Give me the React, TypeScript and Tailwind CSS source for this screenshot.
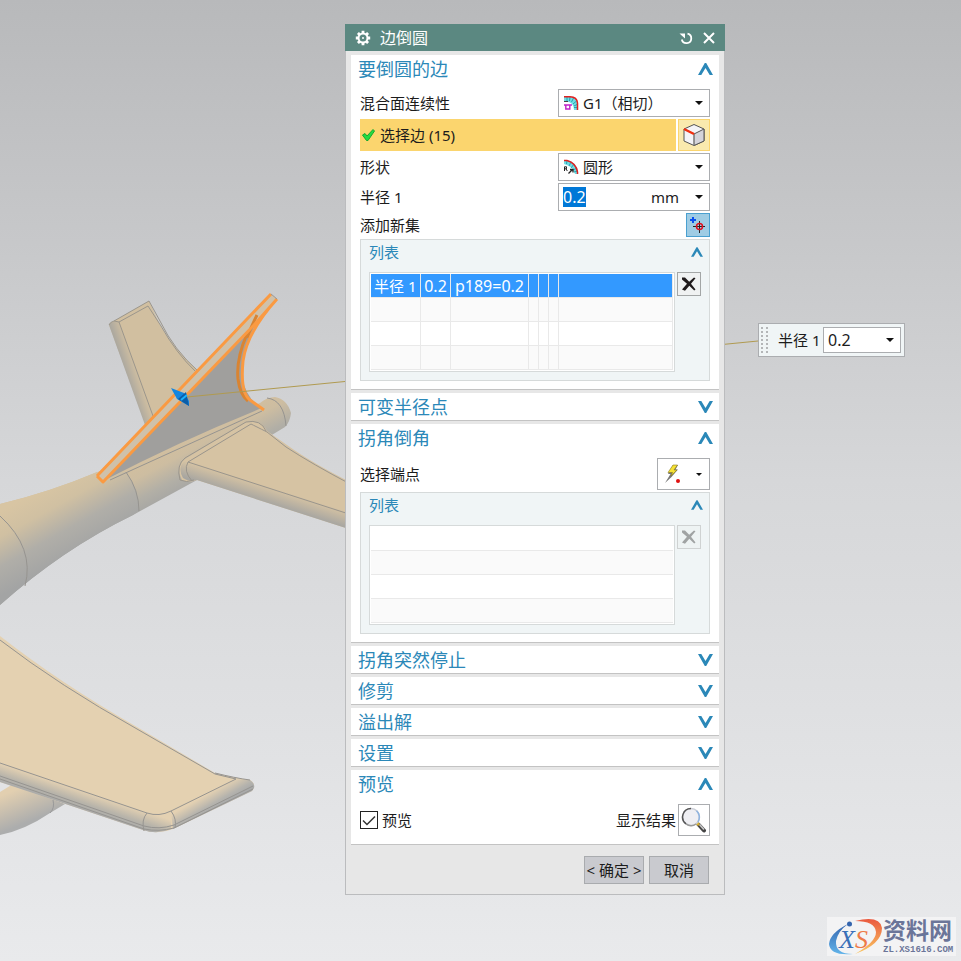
import React, { useEffect, useRef } from "react";

const Chevron = ({ open = false, small = false }: { open?: boolean; small?: boolean }) => (
  <svg
    viewBox="0 0 15 12"
    className={`${small ? "w-3 h-2.5" : "w-[15px] h-3"} ${open ? "" : "rotate-180"}`}
    fill="#2b88b8"
  >
    <path d="M0 12 6.8 0h1.4L15 12h-3.3L7.5 5 3.300 12z" />
  </svg>
);

const Arrow = ({ small = false }: { small?: boolean }) => (
  <svg
    viewBox="0 0 8 4"
    className={`${small ? "w-[6px] h-[3px]" : "w-2 h-1"} shrink-0 pointer-events-none`}
    fill="#111"
  >
    <path d="M0 0h8L4 4z" />
  </svg>
);

const Section = ({
  title,
  open = false,
  children,
}: {
  title: string;
  open?: boolean;
  children?: React.ReactNode;
}) => (
  <section className="bg-white border-b border-[#c3c3c3]">
    <button
      type="button"
      aria-expanded={open}
      className={`w-full pl-[7px] pr-1.5 flex items-center justify-between text-lg leading-7 text-[#2b88b8] ${
        open ? "h-7" : "h-[27px]"
      }`}
    >
      {title}
      <Chevron open={open} />
    </button>
    {open && <div className="px-[9px] pt-1.5 pb-2 flex flex-col gap-0.5">{children}</div>}
  </section>
);

const DeleteButton = ({ disabled = false }: { disabled?: boolean }) => (
  <button
    type="button"
    aria-label="删除"
    disabled={disabled}
    className={`size-6 shrink-0 border flex items-center justify-center ${
      disabled ? "border-[#cfd2d2] bg-[#eef3f3]" : "border-[#a3a6a6] bg-[#f0f2f2]"
    }`}
  >
    <svg viewBox="0 0 16 16" className="size-4" fill={disabled ? "#a0a3a3" : "#1f1a1b"}>
      <path d="M1 1.500h3l4.200 4.300L13 1.500l1.500.8-4.500 5.500 4.500 5.700-1.300 1L8.300 9.800 4 14.700l-3-1.200 5-5.700L1 3.500z" />
    </svg>
  </button>
);

const ListGroup = ({
  disabled = false,
  children,
}: {
  disabled?: boolean;
  children: React.ReactNode;
}) => (
  <div className="border border-[#d6dada] bg-[#f0f5f6] pb-2">
    <button
      type="button"
      aria-expanded="true"
      className="w-full h-6 mb-2 pl-2 pr-1.5 flex items-center justify-between text-[#2b88b8]"
    >
      列表
      <Chevron open small />
    </button>
    <div className="flex items-start gap-0.5 px-2">
      <div className="flex-1 border border-[#d6dada] bg-white p-px">{children}</div>
      <DeleteButton disabled={disabled} />
    </div>
  </div>
);

const emptyRows = [0, 1, 2];
const cell = "h-6 p-0 border-b border-r border-[#e9e9e9]";

const RadiusTable = () => (
  <table className="w-full table-fixed border-separate border-spacing-0 text-white">
    <colgroup>
      <col className="w-[50px]" />
      <col className="w-[30px]" />
      <col className="w-[78px]" />
      <col className="w-[10px]" />
      <col className="w-[10px]" />
      <col className="w-[10px]" />
      <col />
    </colgroup>
    <tbody>
      <tr className="bg-[#3399ff] leading-5">
        <td className={`${cell} pl-[3px] whitespace-nowrap`}>半径 1</td>
        <td className={`${cell} text-base leading-5 text-center`}>0.2</td>
        <td className={`${cell} text-base leading-5 text-center`}>p189=0.2</td>
        <td className={cell} />
        <td className={cell} />
        <td className={cell} />
        <td className={cell} />
      </tr>
      {emptyRows.map((r) => (
        <tr key={r} className="odd:bg-white even:bg-[#fafafa]">
          <td className={cell} />
          <td className={cell} />
          <td className={cell} />
          <td className={cell} />
          <td className={cell} />
          <td className={cell} />
          <td className={cell} />
        </tr>
      ))}
    </tbody>
  </table>
);

const BlendIcon = () => (
  <svg viewBox="0 0 16 16" className="size-4 shrink-0" fill="none">
    <path d="M1 2h6q7 1 8 7v6h-4q0-6-5-8H1z" fill="#6fdce4" />
    <path d="M4 2v4M7 2 6.500 6M10.500 3 8.500 7M13.500 6 10 9M15 9l-4 2M15 12.500h-4" stroke="#1c9cab" strokeWidth="0.900" />
    <path d="M1 1.800h6Q14 2 14.500 8v7" stroke="#e02020" strokeWidth="1.500" />
    <path d="M1 6.500h4" stroke="#444" />
    <path d="M1 10h8M2.800 10v4h4v-4" stroke="#c020c8" strokeWidth="1.400" />
  </svg>
);

const CircleIcon = () => (
  <svg viewBox="0 0 16 16" className="size-4 shrink-0" fill="none">
    <path d="M1 1h3q9 2 11 11v3h-3Q10 7 1 5z" fill="#6fdce4" />
    <path d="M4 1 3.500 5M8 3 6 7M11 5 8 9M14 9l-4 2M15 12l-4 1" stroke="#1c9cab" strokeWidth="0.900" />
    <path d="M1 1.500h3Q13 4 14.500 13v2" stroke="#e02020" strokeWidth="1.500" />
    <path d="M1.500 12V7.800h2v2h-2M3 9.800 4.300 12" stroke="#222" />
    <path d="M5.500 14.500 9 11M7 10.500h3v3" stroke="#222" strokeWidth="1.300" />
  </svg>
);

const CubeIcon = () => (
  <svg viewBox="0 0 24 24" className="size-6" strokeLinejoin="round">
    <path d="M12 1.500 22 6v12l-10 4.500L2 18V6z" fill="#f4f4f8" stroke="#555" />
    <path d="m12 11 10-5v12l-10 4.500z" fill="#d4d4da" stroke="#555" />
    <path d="M12 11v11.500" stroke="#888" />
    <path d="m2 6 10 5" stroke="#f03010" strokeWidth="2.500" />
  </svg>
);

const Scene = () => (
  <svg className="absolute left-0 top-0 w-[961px] h-[961px] max-w-none pointer-events-none" viewBox="0 0 961 961" fill="none" aria-hidden="true">
    <defs>
      <linearGradient id="body" gradientUnits="userSpaceOnUse" x1="180" y1="440" x2="202" y2="482">
        <stop offset="0" stopColor="#d2bf9f" />
        <stop offset="0.300" stopColor="#cdbda1" />
        <stop offset="0.700" stopColor="#b2afa6" />
        <stop offset="1" stopColor="#a6a6a4" />
      </linearGradient>
      <linearGradient id="rear" gradientUnits="userSpaceOnUse" x1="30" y1="495" x2="66" y2="560">
        <stop offset="0" stopColor="#d8c5a3" />
        <stop offset="0.300" stopColor="#d0c0a2" />
        <stop offset="0.650" stopColor="#b0aea8" />
        <stop offset="1" stopColor="#a3a4a4" />
      </linearGradient>
      <linearGradient id="leftEdge" gradientUnits="userSpaceOnUse" x1="126" y1="375" x2="138" y2="371">
        <stop offset="0" stopColor="#aaa79f" />
        <stop offset="1" stopColor="#d2c0a1" />
      </linearGradient>
      <linearGradient id="rightEdge" gradientUnits="userSpaceOnUse" x1="270" y1="487" x2="265" y2="503">
        <stop offset="0" stopColor="#d6c3a3" />
        <stop offset="1" stopColor="#a6a5a1" />
      </linearGradient>
      <linearGradient id="wingEdge" gradientUnits="userSpaceOnUse" x1="75" y1="788" x2="69" y2="806">
        <stop offset="0" stopColor="#e4d1b2" />
        <stop offset="0.600" stopColor="#b8b4aa" />
        <stop offset="1" stopColor="#a9aaaa" />
      </linearGradient>
      <linearGradient id="tipEdge" gradientUnits="userSpaceOnUse" x1="200" y1="798" x2="208" y2="812">
        <stop offset="0" stopColor="#e4d1b2" />
        <stop offset="0.700" stopColor="#b5b3ad" />
        <stop offset="1" stopColor="#a9aaaa" />
      </linearGradient>
      <linearGradient id="pod" gradientUnits="userSpaceOnUse" x1="15" y1="790" x2="28" y2="822">
        <stop offset="0" stopColor="#e2cfb0" />
        <stop offset="1" stopColor="#acadad" />
      </linearGradient>
    </defs>

    {/* far tailplane */}
    <path d="M109 325q1-3 5-4l35-20 11 24q14 24 38 46l-52 54z" fill="#d1bfa0" />
    <path d="M109 325q2-4 10-3l34 95-8 8z" fill="url(#leftEdge)" />
    <path d="M109 325q1-3 5-4l35-20 11 20q14 29 38 50M119 322l29-16 13 20q15 27 35 46M119 322l34 94M114 321l5 1" stroke="#9b968c" />

    {/* fuselage */}
    <path d="M0 504q50-12 100-33l160-68q7-6 15-6 12 2 16 16-1 9-6 14l-88 53-64 35q-70 34-133 90z" fill="url(#body)" />
    <path d="M0 504q50-12 97-32l29 0q13 17 13 39l-6 4q-70 34-133 90z" fill="url(#rear)" />
    <path d="M126 472q13 18 13 39M0 516q35 32 25 70M267 398q17 2 19 28M110 480l152-69" stroke="#969490" />

    {/* near tailplane */}
    <path d="M185 459l61-37q15-3 21 9l20 14q25 18 65 38v47l-155-50q-9 3-15 0-7-14 3-21z" fill="#d6c3a3" />
    <path d="M185 461l167 52v17l-155-50q-9 2-14-2-6-11 2-17z" fill="url(#rightEdge)" />
    <path d="M188 462l63-38q4 2 16 8l19 15q26 17 66 38M188 462l164 53M185 458l61-36q15-3 20 9M185 458q-9 7-5 22 6 3 14 0M188 462q-5 9 4 19" stroke="#9a958c" />

    {/* fin */}
    <path d="M103 481l144-147 10-12q-17 31-15 55 4 22 20 31-80 32-159 73z" fill="#a09f9d" />
    <path d="M97 476 271 294l6 5-174 183z" fill="#cfc1aa" />
    <path d="M247 334q-11 25-9 45 2 16 10 22M257 315q-6 12-10 23" stroke="#d98432" strokeWidth="3" />
    <path d="M97 476 271 294M277 299l-23 26L103 482l-6-6M277 299q-30 33-34 62-3 31 7 39l14 10" stroke="#fa9a42" strokeWidth="3" strokeLinejoin="round" />
    <path d="M271 294l6 5" stroke="#999" />

    {/* leader line and drag handle */}
    <path d="M187 397 758 341" stroke="#b09a50" />
    <path d="m171 388 13 5 5 8 0 5-12-7z" fill="#1486e0" />
    <path d="m178 399 8-7 3 14z" fill="#0c5da8" />
    <path d="m181 400 6-5" stroke="#19b2ff" strokeWidth="2" />

    {/* main wing */}
    <path d="M0 792l13-8 52 20-15 9q-25 17-50 22z" fill="url(#pod)" />
    <path d="M53 800q2 8-3 13" stroke="#999" />
    <path d="M0 636q60 47 137 91l78 46q20 5 35 7 5 3 4 8l-2 3-79 38q-15 6-30 1L0 782z" fill="#e4d1b1" />
    <path d="M0 763l147 50q10 5 24-2v18q-14 6-28 1L0 782z" fill="url(#wingEdge)" />
    <path d="M171 811l65-32 14 1q5 3 4 8l-2 3-79 38z" fill="url(#tipEdge)" />
    <path d="M0 640q60 46 137 89l78 45 21 5-65 32q-12 6-24 2L0 763M215 773q20 5 35 7M0 776l144 50q15 4 30-1l79-39M0 779l144 50q15 3 30-1l79-39M147 813q-6 7-3 18M171 811q6 8 4 17" stroke="#969490" />
  </svg>
);

const Watermark = () => (
  <div className="absolute right-[5px] bottom-[5px] h-[39px] w-[129px] bg-[#f3f3f4] flex items-center">
    <svg viewBox="0 0 56 39" className="w-14 h-[39px] shrink-0" aria-label="XS">
      <defs>
        <linearGradient id="swoosh" x1="0" x2="0" y1="0" y2="1">
          <stop offset="0" stopColor="#3565ae" />
          <stop offset="1" stopColor="#62b4ea" />
        </linearGradient>
        <linearGradient id="swoosh2" x1="0" x2="0" y1="0" y2="1">
          <stop offset="0" stopColor="#ea5a40" />
          <stop offset="1" stopColor="#fac860" />
        </linearGradient>
      </defs>
      <path d="M21 7Q3 16 2 27q1 12 24 10-18 0-17-13Q11 14 21 7z" fill="url(#swoosh)" />
      <path d="M28 4q25-6 27 7 0 16-27 26 21-12 21-22-1-11-21-11z" fill="url(#swoosh2)" />
      <circle cx="22.500" cy="7" r="2.500" fill="#3565ae" />
      <text x="12" y="31" fontSize="26" fontStyle="italic" fontFamily="Liberation Serif, serif" fill="#3a70b8">X</text>
      <text x="28" y="31" fontSize="26" fontStyle="italic" fontFamily="Liberation Serif, serif" fill="#ee7a48">S</text>
    </svg>
    <div className="text-[#6b7599] font-bold">
      <div className="font-['Liberation_Sans','Noto_Sans_CJK_SC',sans-serif] text-[23px] leading-[27px]">资料网</div>
      <div className="font-['Liberation_Mono',monospace] text-[9px] leading-[10px]">ZL.XS1616.COM</div>
    </div>
  </div>
);

const App = () => {
  const radius = useRef<HTMLInputElement>(null);

  useEffect(() => {
    radius.current?.focus();
    radius.current?.select();
  }, []);

  return (
    <main className="relative min-h-screen overflow-hidden pt-6 pb-16 pl-[345px] bg-linear-to-b from-[#b8b9bb] via-[#d6d7d9] to-[#e9eaec] text-[15px] leading-5 text-[#1c1c1c] font-['Noto_Sans','Noto_Sans_CJK_SC',sans-serif]">
      <Scene />

      <div role="dialog" aria-label="边倒圆" className="relative w-[380px]">
        <header className="h-[27px] bg-[#5b8881] text-white flex items-center px-2.5">
          <svg viewBox="0 0 16 16" className="size-4" fill="none" stroke="#fff">
            <circle cx="8" cy="8" r="4.500" strokeWidth="2" />
            <path d="M8 .8v2.400M8 12.800v2.400M.8 8h2.400M12.800 8h2.400M2.900 2.900l1.700 1.700M11.400 11.400l1.700 1.700M13.100 2.900l-1.700 1.700M4.600 11.400l-1.700 1.700" strokeWidth="2.800" />
            <circle cx="8" cy="8" r="1" fill="#fff" stroke="none" />
          </svg>
          <h1 className="flex-1 pl-[9px] text-base leading-5">边倒圆</h1>
          <button type="button" aria-label="重置" className="mr-2.5">
            <svg viewBox="0 0 14 14" className="size-3.5" fill="none" stroke="#fff" strokeWidth="1.800">
              <path d="M8.500 2.700a4.800 4.800 0 1 1-5.700 5.800" />
              <path d="M.5 2.500h5.500v5z" fill="#fff" stroke="none" />
            </svg>
          </button>
          <button type="button" aria-label="关闭">
            <svg viewBox="0 0 12 12" className="size-3" stroke="#fff" strokeWidth="2">
              <path d="m1 1 10 10M11 1 1 11" />
            </svg>
          </button>
        </header>

        <div className="border border-t-0 border-[#bbbcbe] bg-[#e7e7e7] px-[5px] pt-1 pb-2.5 flex flex-col gap-[3px]">
          <Section title="要倒圆的边" open>
            <div className="flex items-center justify-between">
              <label htmlFor="continuity">混合面连续性</label>
              <div className="w-[152px] h-7 border border-[#abadb0] flex items-center pl-1 pr-1.5">
                <BlendIcon />
                <select id="continuity" className="flex-1 min-w-0 appearance-none pl-1 outline-none">
                  <option>G1（相切）</option>
                </select>
                <Arrow />
              </div>
            </div>
            <div className="flex gap-0.5">
              <div className="flex-1 h-8 bg-[#fbd56e] flex items-center pl-0.5 gap-[5px]">
                <svg viewBox="0 0 13 12" className="w-[13px] h-3">
                  <path d="M.5 6 3 4.500 5 7l6-6.500L12.500 2 6 11.500H4.500z" fill="#22dc40" stroke="#17a830" />
                </svg>
                <span>选择边 (15)</span>
              </div>
              <button type="button" aria-label="选择边" className="size-8 border border-[#fbd56e] bg-[#faeaae] flex items-center justify-center">
                <CubeIcon />
              </button>
            </div>
            <div className="flex items-center justify-between">
              <label htmlFor="shape">形状</label>
              <div className="w-[152px] h-7 border border-[#abadb0] flex items-center pl-1 pr-1.5">
                <CircleIcon />
                <select id="shape" className="flex-1 min-w-0 appearance-none pl-1 outline-none">
                  <option>圆形</option>
                </select>
                <Arrow />
              </div>
            </div>
            <div className="flex items-center justify-between">
              <label htmlFor="radius">半径 1</label>
              <div className="w-[152px] h-7 border border-[#abadb0] flex items-center pl-1 pr-1.5">
                <input
                  id="radius"
                  ref={radius}
                  defaultValue="0.2"
                  className="w-20 h-5 text-base leading-5 outline-none selection:bg-[#0078d7] selection:text-white"
                />
                <select aria-label="单位" className="flex-1 min-w-0 appearance-none pl-2 outline-none">
                  <option>mm</option>
                </select>
                <Arrow />
              </div>
            </div>
            <div className="flex items-center justify-between">
              <span>添加新集</span>
              <button type="button" aria-label="添加新集" className="size-6 border border-[#4aa0d0] bg-[#9fcce4] flex items-center justify-center">
                <svg viewBox="0 0 18 18" className="size-[18px]" fill="none">
                  <path d="M1 4h6M4 1v6" stroke="#0a50f0" strokeWidth="2" />
                  <path d="M4 10.500h12M10.500 5v12" stroke="#222" />
                  <circle cx="10.500" cy="10.500" r="3" stroke="#e01020" strokeWidth="1.500" />
                </svg>
              </button>
            </div>
            <ListGroup>
              <RadiusTable />
            </ListGroup>
          </Section>

          <Section title="可变半径点" />

          <Section title="拐角倒角" open>
            <div className="flex items-center justify-between">
              <span>选择端点</span>
              <button type="button" aria-label="选择端点" className="w-[53px] h-8 border border-[#abadb0] flex items-center justify-between pl-1.5 pr-[7px]">
                <svg viewBox="0 0 18 20" className="w-[18px] h-5">
                  <path d="M9 1h5l-2.500 4.500H14L7.500 13 1 19l5.500-9H4z" fill="#777" />
                  <path d="M9 1h4.500L10 6h3l-6 6 1.500-3.500H4z" fill="#f6e234" stroke="#8a7a20" strokeWidth="0.600" />
                  <circle cx="14" cy="17" r="2" fill="#e01010" />
                </svg>
                <Arrow small />
              </button>
            </div>
            <ListGroup disabled>
              <ul>
                {[0, 1, 2, 3].map((r) => (
                  <li key={r} className="h-6 border-b border-[#e9e9e9] even:bg-[#fafafa]" />
                ))}
              </ul>
            </ListGroup>
          </Section>

          <Section title="拐角突然停止" />
          <Section title="修剪" />
          <Section title="溢出解" />
          <Section title="设置" />

          <Section title="预览" open>
            <div className="flex items-center justify-between">
              <label className="flex items-center gap-1">
                <span className="grid size-[18px]">
                  <input type="checkbox" defaultChecked className="col-start-1 row-start-1 appearance-none size-[18px] border border-[#222] bg-white" />
                  <svg viewBox="0 0 18 18" className="col-start-1 row-start-1 size-[18px] pointer-events-none" fill="none" stroke="#333" strokeWidth="1.500">
                    <path d="m3 9.500 4 4 8-8" />
                  </svg>
                </span>
                预览
              </label>
              <div className="flex items-center gap-0.5">
                <span>显示结果</span>
                <button type="button" aria-label="显示结果" className="size-8 border border-[#abadb0] flex items-center justify-center">
                  <svg viewBox="0 0 26 26" className="size-[26px]" fill="none">
                    <path d="m17.500 17.500 5.500 6" stroke="#444" strokeWidth="4" strokeLinecap="round" />
                    <path d="m18.500 17.500 4.500 5" stroke="#c4c4c4" strokeWidth="1.800" />
                    <path d="m15 15 3 3" stroke="#d8b030" strokeWidth="3" />
                    <circle cx="10" cy="10" r="8.500" fill="#efeff3" stroke="#c9ccd4" strokeWidth="1.500" />
                    <path d="M10 1.500a8.500 8.500 0 0 0-5 15.300" stroke="#555" strokeWidth="1.500" />
                    <path d="M5 16.800a8.500 8.500 0 0 0 10 .2" stroke="#999" strokeWidth="1.500" />
                    <path d="M15.500 3.800a8.500 8.500 0 0 1 1.500 11" stroke="#8fb4e0" strokeWidth="1.500" />
                  </svg>
                </button>
              </div>
            </div>
          </Section>

          <footer className="flex justify-end gap-[5px] pt-2 pr-2.5">
            <button type="button" className="w-[60px] h-7 border border-[#a9abae] bg-[#c9cacf] whitespace-nowrap">
              &lt; 确定 &gt;
            </button>
            <button type="button" className="w-[60px] h-7 border border-[#a9abae] bg-[#c9cacf]">
              取消
            </button>
          </footer>
        </div>
      </div>

      {/* on-canvas radius input */}
      <div className="absolute left-[758px] top-[323px] w-[147px] h-[34px] border border-[#abadb0] bg-[#f0f5f6] flex items-center pl-0.5 pr-[3px]">
        <svg viewBox="0 0 7 28" className="w-[7px] h-7" stroke="#b4b6b8" strokeWidth="2" strokeDasharray="2 2">
          <path d="M1 1v26M6 1v26" />
        </svg>
        <label htmlFor="canvasRadius" className="flex-1 pl-2.5 whitespace-nowrap">
          半径 1
        </label>
        <div className="w-[78px] h-[26px] border border-[#abadb0] bg-white flex items-center pl-1 pr-1.5">
          <input id="canvasRadius" defaultValue="0.2" className="flex-1 min-w-0 text-base leading-5 outline-none" />
          <Arrow />
        </div>
      </div>

      <Watermark />
    </main>
  );
};

export default App;
